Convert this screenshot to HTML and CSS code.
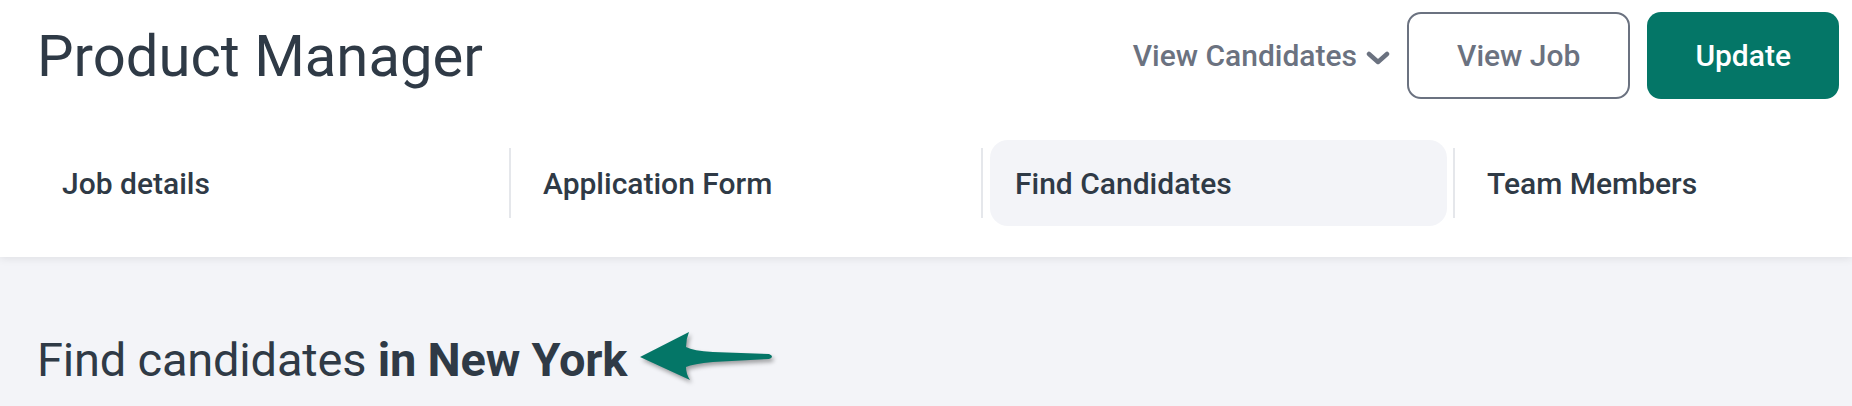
FILE: index.html
```html
<!DOCTYPE html>
<html lang="en">
<head>
    <meta charset="UTF-8">
    <meta name="viewport" content="width=device-width, initial-scale=1.0">
    <title>Product Manager</title>
    <link rel="stylesheet" href="styles.css">
</head>
<body>
    <header class="header">
        <div class="top-row">
            <h1 class="job-title">Product Manager</h1>
            <div class="actions">
                <a class="dropdown" href="#">View Candidates
                    <svg class="chevron" viewBox="0 0 24 14" width="24" height="14"><path d="M3 3 L12 11 L21 3" fill="none" stroke="currentColor" stroke-width="4.5" stroke-linecap="round" stroke-linejoin="round"/></svg>
                </a>
                <a class="btn btn-outline" href="#">View Job</a>
                <a class="btn btn-primary" href="#">Update</a>
            </div>
        </div>
        <nav class="tabs">
            <div class="tab"><a href="#">Job details</a></div>
            <div class="tab"><a href="#">Application Form</a></div>
            <div class="tab active"><a href="#">Find Candidates</a></div>
            <div class="tab"><a href="#">Team Members</a></div>
        </nav>
    </header>
    <main class="content">
        <div class="search-heading">
            <h2>Find candidates <strong>in New York</strong></h2>
            <svg class="arrow" viewBox="0 0 136 54" width="136" height="54"><path d="M2 28 L51 3 Q48 10 48 18 Q55 22 75 23 L131 25 Q134 26 134 27.5 Q134 29 131 30 L75 33 Q55 35 48 38 Q48 45 52 51 Z" fill="#047667"/></svg>
        </div>
    </main>
</body>
</html>
```

FILE: styles.css
```css
body {
    font-family: Roboto, "Noto Sans", sans-serif;
    margin: 0;
    padding: 0;
    background-color: #f3f4f8;
    color: #2f3a46;
}
a {
    text-decoration: none;
    color: inherit;
}
.header {
    background-color: #fff;
    padding: 12px 13px 31px 37px;
    box-shadow: 0 2px 8px rgba(0, 0, 0, 0.08);
}
.top-row {
    display: flex;
    justify-content: space-between;
    align-items: center;
    height: 87px;
}
.job-title {
    margin: 0;
    font-size: 58px;
    font-weight: 400;
    color: #2f3a46;
}
.actions {
    display: flex;
    align-items: center;
    gap: 17px;
    height: 100%;
}
.dropdown {
    display: flex;
    align-items: center;
    gap: 9px;
    font-size: 30px;
    font-weight: 500;
    color: #6b7280;
}
.chevron {
    margin-top: 4px;
}
.btn {
    display: flex;
    align-items: center;
    height: 100%;
    box-sizing: border-box;
    padding: 0 48px;
    font-size: 30px;
    font-weight: 500;
    border-radius: 14px;
}
.btn-outline {
    border: 2px solid #6b7280;
    color: #6b7280;
}
.btn-primary {
    background-color: #047667;
    color: #fff;
}
.tabs {
    display: flex;
    margin-top: 41px;
}
.tab {
    flex: 0 0 472px;
    display: flex;
    align-items: center;
}
.tab + .tab::before {
    content: '';
    flex-shrink: 0;
    width: 2px;
    height: 70px;
    background-color: #e5e7eb;
}
.tab a {
    flex: 1;
    display: flex;
    align-items: center;
    height: 86px;
    margin: 0 6px 0 7px;
    padding-left: 25px;
    border-radius: 18px;
    font-size: 30px;
    font-weight: 500;
    color: #2f3a46;
}
.tab:first-child a {
    margin-left: 0;
}
.tab.active a {
    background-color: #f3f4f8;
}
.content {
    padding: 72px 37px 0;
}
.search-heading {
    display: flex;
    align-items: center;
    gap: 11px;
}
.search-heading h2 {
    margin: 0;
    font-size: 47px;
    line-height: 58px;
    letter-spacing: -0.2px;
    font-weight: 400;
}
.search-heading strong {
    font-weight: 700;
}
.arrow {
    margin-bottom: 8px;
    filter: drop-shadow(2px 3px 2px rgba(0, 0, 0, 0.35));
}
```
